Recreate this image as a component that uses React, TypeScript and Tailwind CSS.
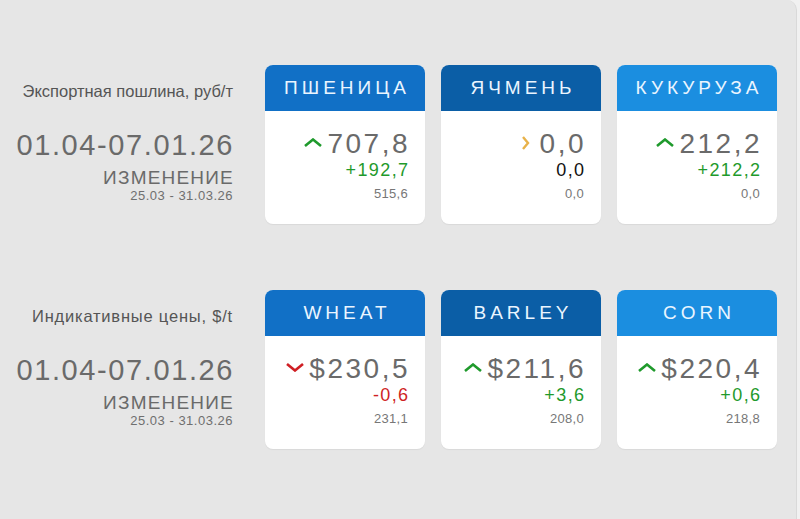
const rows = [
  {
    label: 'Экспортная пошлина, руб/т',
    labelTrack: 'tracking-[0px]',
    cards: [
      { title: 'ПШЕНИЦА', head: 'bg-[#1170c6]', trend: 'up', value: '707,8', change: '+192,7', base: '515,6' },
      { title: 'ЯЧМЕНЬ', head: 'bg-[#0b5ea6]', trend: 'flat', value: '0,0', change: '0,0', base: '0,0' },
      { title: 'КУКУРУЗА', head: 'bg-[#1b8ee0]', trend: 'up', value: '212,2', change: '+212,2', base: '0,0' },
    ],
  },
  {
    label: 'Индикативные цены, $/t',
    labelTrack: 'tracking-[0.8px]',
    cards: [
      { title: 'WHEAT', head: 'bg-[#1170c6]', trend: 'down', value: '$230,5', change: '-0,6', base: '231,1' },
      { title: 'BARLEY', head: 'bg-[#0b5ea6]', trend: 'up', value: '$211,6', change: '+3,6', base: '208,0' },
      { title: 'CORN', head: 'bg-[#1b8ee0]', trend: 'up', value: '$220,4', change: '+0,6', base: '218,8' },
    ],
  },
];

type Trend = 'up' | 'down' | 'flat';

function Chevron({ trend }: { trend: Trend }) {
  if (trend === 'flat') {
    return (
      <svg width="18" height="16" viewBox="0 0 18 16" className="mt-[-2px]">
        <polyline points="6,2 11,8 6,14" fill="none" stroke="#e8b24a" strokeWidth="2.4" />
      </svg>
    );
  }
  const up = trend === 'up';
  return (
    <svg width="18" height="9" viewBox="0 0 18 9" className="mt-[-3px]">
      <polyline
        points={up ? '1,8 9,1.5 17,8' : '1,1 9,7.5 17,1'}
        fill="none"
        stroke={up ? '#1f9a2c' : '#cf1f24'}
        strokeWidth="2.6"
      />
    </svg>
  );
}

function Card({ card }: { card: (typeof rows)[number]['cards'][number] }) {
  const changeColor =
    card.trend === 'up' ? 'text-[#1f9a2c]' : card.trend === 'down' ? 'text-[#cf1f24]' : 'text-[#111111]';
  return (
    <div className="w-[160px] h-[159px] bg-white rounded-[8px] overflow-hidden shadow-[0_1px_1px_rgba(0,0,0,0.06)]">
      <div className={`${card.head} h-[46px] flex items-center justify-center pl-[4px] text-[19px] tracking-[4px] text-[#eaf5ff]`}>
        {card.title}
      </div>
      <div className="flex flex-col items-end pr-[15px] pt-[17px]">
        <div className="flex items-center gap-[5px] h-[32px]">
          <Chevron trend={card.trend as Trend} />
          <span className="text-[28px] leading-[32px] tracking-[2.5px] text-[#6a6a6a]">{card.value}</span>
        </div>
        <div className={`h-[21px] pr-[0.5px] text-[18px] leading-[21px] tracking-[1.4px] ${changeColor}`}>{card.change}</div>
        <div className="h-[16px] mt-[5px] pr-[2px] text-[13px] leading-[16px] tracking-[0.3px] text-[#777777]">{card.base}</div>
      </div>
    </div>
  );
}

export default function App() {
  return (
    <div className="w-[800px] h-[519px] bg-[#f1f1f1] font-['Liberation_Sans',Arial,sans-serif]">
      <div className="w-[797px] h-[519px] bg-[#e6e6e6] rounded-tr-[10px] border-r border-[#d9d9d9] pt-[65px] flex flex-col gap-[66px]">
        {rows.map((row, i) => (
          <div key={i} className="flex">
            <div className="w-[233px] flex flex-col items-end text-right">
              <div className={`mt-[16px] h-[20px] text-[16.5px] leading-[20px] text-[#555555] ${row.labelTrack}`}>
                {row.label}
              </div>
              <div className="mt-[27px] h-[34px] mr-[-1px] text-[29px] leading-[34px] tracking-[1.6px] text-[#6a6a6a]">
                01.04-07.01.26
              </div>
              <div className="mt-[6px] h-[20px] mr-[-1px] text-[19px] leading-[20px] tracking-[1.2px] text-[#6a6a6a]">ИЗМЕНЕНИЕ</div>
              <div className="h-[15px] text-[13px] leading-[15px] tracking-[0.5px] text-[#6f6f6f]">25.03 - 31.03.26</div>
            </div>
            <div className="ml-[32px] flex gap-[16px]">
              {row.cards.map((c) => (
                <Card key={c.title} card={c} />
              ))}
            </div>
          </div>
        ))}
      </div>
    </div>
  );
}
